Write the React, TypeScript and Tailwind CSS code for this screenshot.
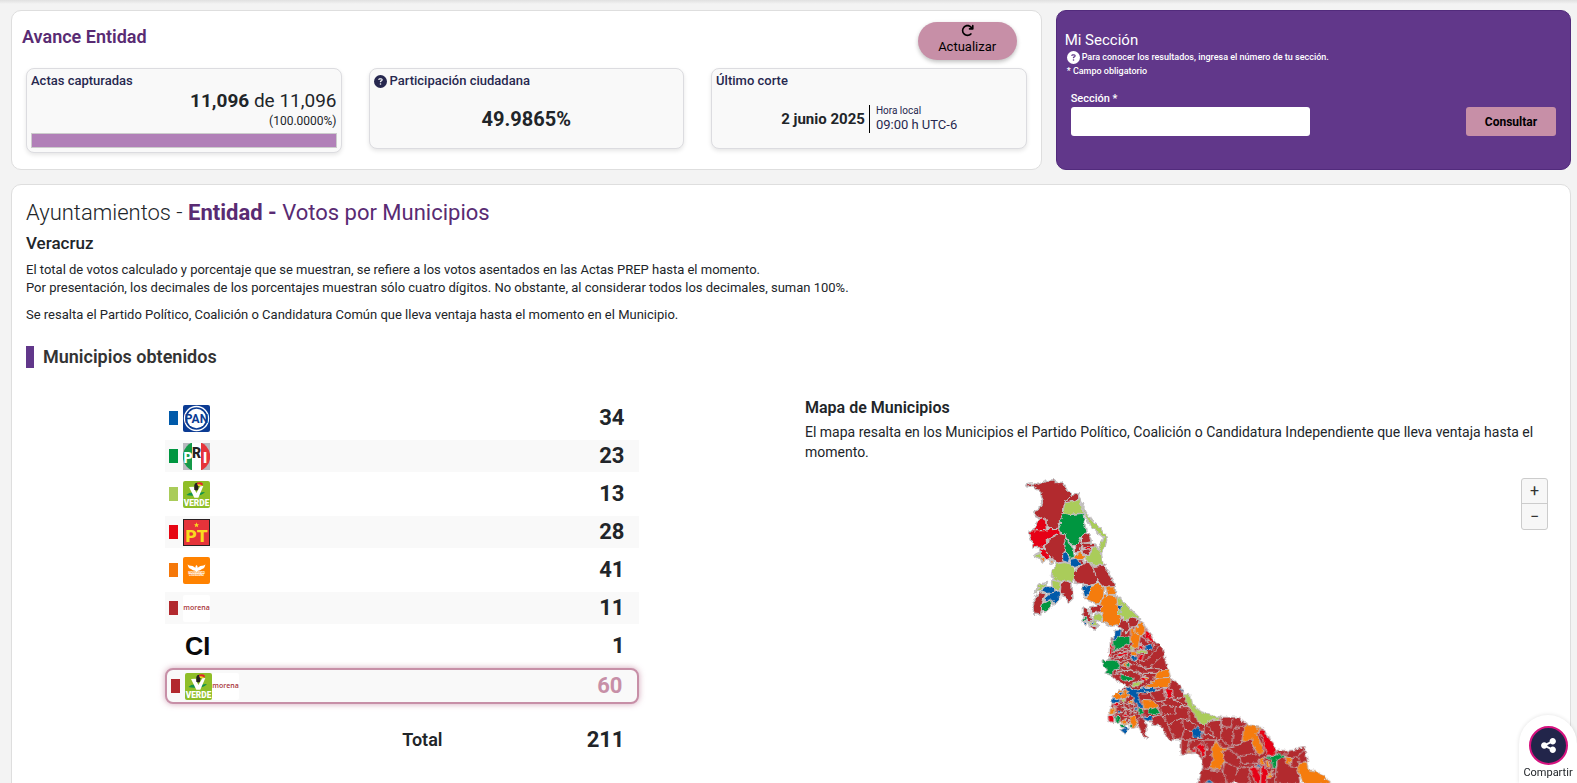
import React, { useState } from 'react';
import { FaCircleQuestion, FaArrowRotateRight, FaShareNodes } from 'react-icons/fa6';

const RED = '#b2292e';
const BRIGHT = '#e60613';
const GREEN = '#009640';
const LIME = '#aacc5a';
const BLUE = '#005aaa';
const ORANGE = '#f57c0f';

type Shape = [string, string];

const north: Shape[] = [
  [RED, '45,50 47,42 62,40 80,45 108,33 130,30 132,38 152,38 162,50 170,65 183,76 165,90 160,102 157,128 145,155 142,175 118,176 105,172 106,152 92,146 78,140 66,126 82,120 96,92 90,68 78,55 60,46'],
  [RED, '164,92 183,76 202,72 203,87 190,94 163,98'],
  [LIME, '160,102 163,98 190,94 206,88 212,108 216,130 200,130 180,134 157,128'],
  [GREEN, '157,130 180,134 216,130 222,170 226,190 212,198 205,215 185,228 165,200 160,190 140,184 150,160 145,152'],
  [GREEN, '163,200 178,226 186,236 190,262 178,265 165,245 158,225'],
  [BRIGHT, '78,158 90,142 104,152 106,180 90,182 68,180'],
  [BRIGHT, '55,183 100,182 118,176 142,175 148,188 125,200 105,215 98,232 70,232 60,205'],
  [RED, '105,218 125,202 150,188 165,200 158,225 165,245 155,258 158,275 140,280 125,265 118,258 103,248'],
  [BRIGHT, '85,237 98,235 105,250 118,262 110,268 95,258'],
  [LIME, '72,255 85,248 92,262 80,267'],
  [ORANGE, '91,262 103,265 97,278'],
  [ORANGE, '117,268 127,272 122,282'],
  [LIME, '212,100 225,128 245,155 270,180 288,202 282,228 272,246 262,240 275,215 279,203 255,183 238,162 222,135'],
  [LIME, '222,262 240,248 252,226 262,240 270,245 275,285 250,287 230,275'],
  [RED, '215,195 232,190 240,215 228,218 214,220'],
  [RED, '192,225 208,215 214,228 205,245 190,245'],
  [RED, '214,220 250,220 252,230 236,232 216,230'],
  [BRIGHT, '212,230 240,232 244,240 226,240'],
  [RED, '212,240 244,240 230,252 218,255'],
  [ORANGE, '192,262 205,245 220,258 218,268 195,270'],
  [RED, '196,268 215,270 222,280 206,282'],
  [BLUE, '155,250 165,245 175,265 172,278 155,272'],
  [BLUE, '178,268 195,265 210,280 205,288 192,292 178,285'],
  [LIME, '135,282 160,278 178,282 190,295 193,315 185,335 160,330 148,335 130,325 122,320 125,300'],
  [RED, '190,312 200,295 225,275 245,287 250,300 258,325 255,342 235,345 215,342 192,338'],
  [RED, '245,290 280,285 300,325 313,350 290,352 270,345 258,328'],
  [LIME, '122,330 148,335 145,360 125,355'],
  [LIME, '72,368 85,345 108,338 100,352 85,360'],
  [BLUE, '92,362 105,350 130,352 132,368 110,370'],
  [BLUE, '100,385 118,370 145,362 145,390 130,402 122,390 100,392'],
  [GREEN, '93,400 120,390 125,405 102,425 90,418'],
  [RED, '78,375 90,368 104,372 95,395 88,434 70,432 65,405'],
  [RED, '150,345 160,332 182,340 185,385 172,398 165,378 148,372'],
  [BLUE, '215,350 242,345 238,372 220,378'],
  [ORANGE, '225,385 245,350 255,338 280,355 277,385 262,402 230,390'],
  [ORANGE, '284,352 312,350 313,374 290,372'],
  [ORANGE, '278,378 292,374 318,378 322,400 318,420 330,440 330,462 300,468 275,455 272,425 262,412'],
  [LIME, '318,380 340,400 388,447 362,445 342,450 320,425'],
  [BLUE, '318,402 335,405 332,425 320,420'],
  [RED, '215,415 230,418 242,450 232,454 216,435'],
  [RED, '236,412 272,405 270,424 240,430'],
  [LIME, '246,438 265,430 278,448 250,455'],
  [LIME, '232,455 250,450 262,466 240,466'],
  [GREEN, '215,442 226,444 226,452 216,452'],
  [BLUE, '217,455 230,457 222,466'],
  [RED, '238,468 257,470 250,480'],
  [BLUE, '240,455 250,453 246,463'],
  [RED, '322,470 330,450 348,448 357,470 345,490 334,476'],
  [RED, '350,448 362,444 385,450 378,468 355,472'],
];

const center: Shape[] = [
  [RED, '112,100 145,83 170,88 192,105 215,145 245,175 255,222 268,262 300,290 310,315 335,345 370,390 420,390 420,450 265,450 240,408 212,402 196,385 195,430 202,446 188,440 165,395 130,400 100,385 90,350 100,310 135,290 100,265 76,240 75,210 88,208 85,160 105,128 120,118'],
  [ORANGE, '148,112 160,120 162,108 175,97 190,104 192,128 178,138 172,170 160,178 148,150'],
  [ORANGE, '162,108 178,98 192,108 192,126 178,136 162,128'],
  [BRIGHT, '193,112 215,145 224,168 206,155 193,138'],
  [BLUE, '102,122 122,118 118,137 95,157'],
  [GREEN, '95,160 112,140 145,142 147,160 125,172 100,182'],
  [BRIGHT, '85,158 94,155 92,200 84,205'],
  [BRIGHT, '175,165 188,170 182,180 172,178'],
  [BLUE, '190,170 205,162 218,172 208,182 192,182'],
  [LIME, '168,180 190,180 198,190 172,192'],
  [LIME, '147,168 155,166 160,182 150,182'],
  [ORANGE, '148,184 166,186 170,198 150,196'],
  [BLUE, '146,198 165,200 174,212 155,210'],
  [BRIGHT, '112,192 142,185 140,192 112,202'],
  [BRIGHT, '176,196 190,196 180,214 170,206'],
  [ORANGE, '122,224 140,214 150,226 135,232'],
  [GREEN, '134,222 146,220 146,232 138,230'],
  [RED, '100,205 140,200 130,212 96,218'],
  [GREEN, '63,212 100,210 118,222 115,238 95,240 96,255 75,250 80,240 68,228'],
  [GREEN, '118,252 155,262 158,270 132,273 118,265'],
  [LIME, '158,278 186,272 172,288 150,288'],
  [BRIGHT, '180,262 205,262 195,275 178,270'],
  [ORANGE, '188,256 205,262 195,270'],
  [ORANGE, '225,250 262,235 268,262 245,262 215,268'],
  [ORANGE, '190,288 235,264 268,262 270,278 262,292 210,294'],
  [BLUE, '133,290 160,298 195,293 225,298 208,310 185,312 168,308 176,330 186,352 172,352 155,320 140,312'],
  [BLUE, '178,294 215,292 228,300 205,310'],
  [RED, '205,308 250,296 255,330 228,336'],
  [ORANGE, '97,315 112,300 140,303 142,322 118,328 100,326'],
  [BLUE, '110,308 128,306 122,318'],
  [BLUE, '92,328 112,325 118,335 95,342'],
  [ORANGE, '183,328 215,330 234,352 212,358 188,356'],
  [GREEN, '200,360 225,352 238,365 225,375 205,372'],
  [GREEN, '170,358 184,355 188,372 176,372'],
  [BLUE, '180,378 216,380 212,396 192,390'],
  [BRIGHT, '252,295 272,298 274,318 258,325'],
  [BLUE, '298,292 306,300 304,312'],
  [BRIGHT, '80,378 100,375 98,398 84,395'],
  [ORANGE, '88,356 102,352 102,372 84,374'],
  [GREEN, '102,378 116,380 118,395 104,398'],
  [ORANGE, '145,378 165,380 168,412 152,416'],
  [ORANGE, '122,392 136,388 140,404 126,406'],
  [GREEN, '116,402 130,404 134,414 120,412'],
  [BLUE, '118,420 134,412 144,416 130,430'],
  [GREEN, '143,404 152,402 152,414 144,412'],
  [BLUE, '106,364 120,360 118,372'],
  [BRIGHT, '98,340 114,340 110,352 98,350'],
  [LIME, '118,330 134,326 132,340'],
  [ORANGE, '140,334 158,330 150,344'],
  [BRIGHT, '126,372 142,372 138,384 128,382'],
  [BLUE, '160,355 170,350 168,365'],
  [BLUE, '332,425 348,407 365,428 362,442 335,442'],
];

const south: Shape[] = [
  [RED, '0,105 30,130 65,165 120,171 175,172 200,195 243,202 262,225 285,270 325,272 370,262 380,305 350,325 358,372 172,372 160,360 150,372 50,372 65,320 60,295 45,280 0,282'],
  [LIME, '8,103 28,106 35,135 60,155 95,168 117,172 112,180 88,180 70,197 50,185 38,160 20,135'],
  [BRIGHT, '108,174 120,172 120,188 108,188'],
  [BLUE, '28,215 45,200 66,218 60,235 32,232'],
  [ORANGE, '105,240 118,262 137,262 135,272 122,275 131,305 115,328 85,325 95,295 90,268'],
  [BRIGHT, '48,260 62,248 76,270 64,292'],
  [BRIGHT, '28,275 45,262 42,278'],
  [ORANGE, '17,270 28,268 24,282'],
  [ORANGE, '188,205 200,195 220,198 235,205 228,222 240,250 250,275 235,285 215,260 216,238 183,246'],
  [ORANGE, '226,202 243,203 236,214'],
  [BRIGHT, '232,215 248,210 264,235 278,250 285,285 260,285 250,260 245,235'],
  [GREEN, '248,290 286,288 290,278 300,284 316,290 288,300 288,320 275,326 272,300'],
  [ORANGE, '313,290 333,292 325,318 314,308'],
  [ORANGE, '235,298 250,295 248,310 236,312'],
  [ORANGE, '254,305 266,304 268,326 258,322'],
  [ORANGE, '255,345 275,330 272,352 260,356'],
  [BRIGHT, '207,325 222,318 240,345 236,374 220,362'],
  [BRIGHT, '240,320 250,312 262,345 255,374 238,374'],
  [BLUE, '227,318 238,315 233,330'],
  [ORANGE, '348,325 355,310 378,308 382,330 405,332 445,362 450,374 370,374 358,350'],
  [BLUE, '72,368 85,358 98,370'],
];

const centerLines =
  'M112,100L140,112L148,112M145,83L140,112M170,88L162,108M178,138L205,155M172,160L192,170M120,172L148,180L110,190L90,205M95,185L125,178M100,215L160,205L190,215L235,170M110,235L160,222L200,238L240,200M150,205L185,230L255,240M118,222L170,250L225,250M105,245L150,240L190,262M100,255L130,240M140,290L200,262L160,240M128,345L138,380M145,330L150,372M158,335L160,380M120,350L168,370M100,372L160,352M105,395L165,390M112,340L165,345M160,405L180,378L170,355M226,305L250,345L285,350L325,350M250,345L232,352L240,375L215,380M285,350L280,370L240,378M275,298L275,330L325,350L325,392L345,405M275,330L310,320M245,378L260,405L300,385L325,392M300,385L310,420L335,425M260,405L280,450M310,420L300,450M365,428L375,395L420,390M365,428L400,440L410,450M375,395L400,440';

const southLines =
  'M0,195L20,195L30,160L20,135M0,230L30,232L20,270M20,195L32,215M66,218L75,200L112,235L105,250M75,185L75,200M66,218L95,240M60,235L80,262L62,300M112,180L108,235M120,188L120,200L150,205L155,175M120,200L115,235L150,262L160,205L200,195M137,265L180,250L185,245M137,265L175,290L225,280L215,262M150,262L180,250M175,290L180,310L170,325L225,318L235,298M131,305L170,325L165,350M131,305L125,335L140,372M65,325L125,335M180,310L230,310M285,300L285,372M333,292L348,290L355,310M333,292L330,320L350,322M325,272L310,285M348,290L370,270M205,325L205,372M262,345L285,340';

function Shapes({ items }: { items: Shape[] }) {
  return (
    <>
      {items.map(([fill, points], i) => (
        <polygon key={i} points={points} fill={fill} />
      ))}
    </>
  );
}

function VeracruzMap() {
  return (
    <svg viewBox="0 0 1020 939" className="w-[340px] max-w-full" role="img" aria-label="Mapa de Municipios">
      <defs>
        <filter id="coast" x="-5%" y="-5%" width="110%" height="110%">
          <feTurbulence type="fractalNoise" baseFrequency="0.08" numOctaves="2" seed="4" />
          <feDisplacementMap in="SourceGraphic" scale="14" xChannelSelector="R" yChannelSelector="G" />
        </filter>
      </defs>
      <g stroke="#c4c0c2" strokeWidth="3" strokeLinejoin="round" fill="none" filter="url(#coast)">
        <g transform="translate(510 570)">
          <Shapes items={south} />
          <path d={southLines} />
        </g>
        <g transform="translate(210 360)">
          <Shapes items={center.slice(0, 1)} />
          <path d={centerLines} />
          <Shapes items={center.slice(1)} />
        </g>
        <g transform="translate(510 570)">
          <Shapes items={south.slice(1, 2)} />
        </g>
        <g strokeWidth="6">
          <Shapes items={north} />
        </g>
        <Shapes items={north} />
      </g>
    </svg>
  );
}

const logo = 'size-[27px] shrink-0';

function PanLogo() {
  return (
    <svg viewBox="0 0 81 81" className={logo}>
      <rect width="81" height="81" rx="6" fill="#0b3b93" />
      <circle cx="40.5" cy="40.5" r="36" fill="none" stroke="#fff" strokeWidth="4" />
      <circle cx="40.5" cy="40.5" r="29" fill="#fff" />
      <text x="40.5" y="54" textAnchor="middle" fontSize="36" fontWeight="700" fontFamily="Roboto, sans-serif" fill="#0b3b93">PAN</text>
    </svg>
  );
}

function PriLogo() {
  return (
    <svg viewBox="0 0 81 81" className={logo}>
      <defs>
        <clipPath id="pri"><ellipse cx="40.5" cy="40.5" rx="41" ry="44" /></clipPath>
      </defs>
      <rect width="81" height="81" fill="#b9b9bf" />
      <g clipPath="url(#pri)">
        <rect width="27" height="81" fill="#159a49" />
        <rect x="27" width="27" height="81" fill="#fff" />
        <rect x="54" width="27" height="81" fill="#e5343b" />
      </g>
      <g fontFamily="Roboto, sans-serif" fontWeight="900" fontSize="42" textAnchor="middle">
        <text x="15" y="59" fill="#fff">P</text>
        <text x="41" y="46" fill="#262223">R</text>
        <text x="66" y="59" fill="#fff">I</text>
      </g>
    </svg>
  );
}

function VerdeLogo() {
  return (
    <svg viewBox="0 0 81 81" className={logo}>
      <rect width="81" height="81" rx="6" fill="#8fbe27" />
      <path d="M10 42Q22 32 36 36L66 33Q56 44 42 43Q24 46 10 42Z" fill="#12934a" />
      <path d="M18 18L32 17L40 36L52 16L61 15L46 50L34 50Z" fill="#fff" />
      <path d="M34 12Q36 4 44 5L47 14L45 25Q40 32 34 25Z" fill="#231f20" />
      <path d="M42 5Q54 2 60 8L58 14Q50 9 43 11Z" fill="#e5252c" />
      <path d="M43 10Q52 8 58 14L45 15Z" fill="#f6d321" />
      <text x="40.5" y="76" textAnchor="middle" fontFamily="Roboto, sans-serif" fontWeight="900" fontSize="25" fill="#fff">VERDE</text>
    </svg>
  );
}

function PtLogo() {
  return (
    <svg viewBox="0 0 81 81" className={logo}>
      <rect x="1.5" y="1.5" width="78" height="78" fill="#e5333a" stroke="#2a2022" strokeWidth="3" />
      <path d="M40.5 10L42.5 15.5L48 16L44 19.5L45.5 25L40.5 22L35.5 25L37 19.5L33 16L38.5 15.5Z" fill="#f9dc1f" />
      <text x="41" y="69" textAnchor="middle" fontFamily="Roboto, sans-serif" fontWeight="900" fontSize="52" fill="#f9dc1f">PT</text>
    </svg>
  );
}

function McLogo() {
  return (
    <svg viewBox="0 0 81 81" className={logo}>
      <rect width="81" height="81" rx="6" fill="#ff8200" />
      <path d="M14 22Q17 27 29 27L37 32L38 27L40.5 24L43 27L44 32L52 27Q64 27 67 22Q66 34 57 36Q52 41 45 41L40.5 45L36 41Q29 41 24 36Q15 34 14 22Z" fill="#fff" />
      <g fontFamily="Roboto, sans-serif" fontWeight="700" fontSize="8" textAnchor="middle" fill="#fff">
        <text x="40.5" y="51">MOVIMIENTO</text>
        <text x="40.5" y="58">CIUDADANO</text>
      </g>
    </svg>
  );
}

function MorenaLogo() {
  return (
    <svg viewBox="0 0 81 81" className={logo}>
      <rect width="81" height="81" rx="6" fill="#fff" />
      <text x="40.5" y="45" textAnchor="middle" fontFamily="'Open Sans', sans-serif" fontWeight="600" fontSize="21" fill="#a9343a">morena</text>
    </svg>
  );
}

function CiLogo() {
  return (
    <svg viewBox="0 0 81 81" className={logo}>
      <text x="44" y="67" textAnchor="middle" fontFamily="'Liberation Sans', sans-serif" fontWeight="700" fontSize="76" fill="#0a0a0a">CI</text>
    </svg>
  );
}

const parties = [
  { id: 'pan', swatch: 'bg-[#005aaa]', Logo: PanLogo, total: 34 },
  { id: 'pri', swatch: 'bg-[#009640]', Logo: PriLogo, total: 23 },
  { id: 'pvem', swatch: 'bg-[#aacc5a]', Logo: VerdeLogo, total: 13 },
  { id: 'pt', swatch: 'bg-[#e60613]', Logo: PtLogo, total: 28 },
  { id: 'mc', swatch: 'bg-[#f5780a]', Logo: McLogo, total: 41 },
  { id: 'morena', swatch: 'bg-[#b2292e]', Logo: MorenaLogo, total: 11 },
  { id: 'ci', swatch: 'bg-transparent', Logo: CiLogo, total: 1 },
];

function StatCard({ title, help, children }: { title: string; help?: boolean; children: React.ReactNode }) {
  return (
    <div className="flex min-h-[81px] flex-col rounded-lg border border-[#dcdce0] bg-[#f9f9f9] px-1 pt-1 shadow-[0_2px_4px_rgba(0,0,0,0.1)]">
      <h3 className="flex items-center gap-[3px] text-[13px] leading-4 font-medium text-[#27284f]">
        {help && <FaCircleQuestion className="size-[13px]" />}
        {title}
      </h3>
      {children}
    </div>
  );
}

export default function App() {
  const [section, setSection] = useState('');

  return (
    <div className="min-h-screen bg-[#f3f3f3] font-[Roboto,sans-serif] text-[#212529]">
      <div className="h-1 bg-linear-to-b from-[#e0e0e0] to-[#f3f3f3]" />
      <main className="pt-1.5 pr-1.5 pl-[11px]">
        <div className="grid gap-3.5 lg:grid-cols-[2fr_1fr]">
          <section className="min-h-40 rounded-[10px] border border-[#dedede] bg-white px-3.5 pt-[11px]">
            <div className="-ml-1 flex items-start justify-between pr-2.5">
              <h2 className="pt-[3px] text-lg leading-6 font-semibold text-[#592b73]">Avance Entidad</h2>
              <button className="flex h-[38px] w-[99px] flex-col items-center rounded-full bg-[#c78fa7] pt-0.5 text-[13px] leading-5 text-black shadow-[0_2px_4px_rgba(0,0,0,0.25)]">
                <FaArrowRotateRight className="size-[13px] shrink-0" />
                Actualizar
              </button>
            </div>
            <div className="mt-2 grid items-start gap-[27px] md:grid-cols-3">
              <StatCard title="Actas capturadas">
                <p className="text-right text-[19px] leading-6">
                  <b className="font-bold">11,096</b> de 11,096
                </p>
                <p className="text-right text-xs leading-4">(100.0000%)</p>
                <div className="mt-1 mb-1 h-[15px] border border-[#ccc] bg-[#b180b8]" role="progressbar" aria-valuenow={100} aria-label="Actas capturadas" />
              </StatCard>
              <StatCard title="Participación ciudadana" help>
                <p className="mt-4 text-center text-xl leading-7 font-bold">49.9865%</p>
              </StatCard>
              <StatCard title="Último corte">
                <div className="mt-4 grid grid-cols-2 items-center">
                  <p className="pr-1 text-right text-[15px] leading-7 font-bold">2 junio 2025</p>
                  <div className="border-l border-black pl-1.5 text-[13px] leading-4 text-[#27284f]">
                    <p className="text-[10px] leading-3">Hora local</p>
                    09:00 h UTC-6
                  </div>
                </div>
              </StatCard>
            </div>
          </section>

          <section className="rounded-[10px] border border-[#522b7c] bg-[#61378a] px-2 pt-[19px] text-white">
            <h2 className="text-[15px] leading-5">Mi Sección</h2>
            <div className="pl-0.5 text-[9px] leading-[14px] font-medium">
              <p className="flex items-center gap-0.5">
                <FaCircleQuestion className="size-[13px]" />
                Para conocer los resultados, ingresa el número de tu sección.
              </p>
              <p>* Campo obligatorio</p>
            </div>
            <form className="mt-[13px] flex items-end justify-between gap-4 px-1.5" onSubmit={(e) => e.preventDefault()}>
              <div className="w-[239px]">
                <label htmlFor="seccion" className="block text-[11px] leading-4 font-medium">Sección *</label>
                <input
                  id="seccion"
                  type="text"
                  value={section}
                  onChange={(e) => setSection(e.target.value)}
                  className="block h-[29px] w-full rounded-[3px] bg-white px-2 text-sm text-[#212529]"
                />
              </div>
              <button type="submit" className="h-[29px] w-[90px] rounded-[3px] bg-[#c78fa7] text-xs font-bold text-black">Consultar</button>
            </form>
          </section>
        </div>

        <section className="mt-3.5 rounded-t-[10px] border border-[#dedede] bg-white px-3.5 pt-3.5 pb-6">
          <h1 className="text-[22px] leading-7 text-[#592b73]">
            <span className="font-light text-[#212529]">Ayuntamientos - </span>
            <b className="font-bold">Entidad - </b>
            Votos por Municipios
          </h1>
          <h2 className="mt-1.5 text-[17px] leading-5 font-medium">Veracruz</h2>
          <p className="mt-2 text-[13px] leading-[18px]">
            El total de votos calculado y porcentaje que se muestran, se refiere a los votos asentados en las Actas PREP hasta el momento.
            <br />
            Por presentación, los decimales de los porcentajes muestran sólo cuatro dígitos. No obstante, al considerar todos los decimales, suman 100%.
          </p>
          <p className="mt-[9px] text-[13px] leading-[18px]">
            Se resalta el Partido Político, Coalición o Candidatura Común que lleva ventaja hasta el momento en el Municipio.
          </p>
          <h2 className="mt-[22px] border-l-8 border-[#61378a] pl-[9px] text-lg leading-[22px] font-semibold text-[#333]">Municipios obtenidos</h2>

          <div className="mt-[30px] grid gap-7 lg:grid-cols-2">
            <table className="mx-auto mt-1 block w-full max-w-[474px]" aria-label="Municipios obtenidos">
              <tbody className="flex flex-col gap-1.5">
                {parties.map(({ id, swatch, Logo, total }) => (
                  <tr key={id} className="flex h-8 items-center justify-between pr-3.5 pl-1 even:bg-[#f9f9f9]">
                    <td className="flex items-center gap-[5px]">
                      <span className={`h-3.5 w-[9px] ${swatch}`} />
                      <Logo />
                    </td>
                    <td className="text-[22px] leading-8 font-bold">{total}</td>
                  </tr>
                ))}
                <tr className="flex h-9 items-center justify-between rounded-lg border-2 border-[#c78fa7] bg-[#f9f9f9] pr-3.5 pl-1 shadow-[0_0_6px_rgba(199,143,167,0.8)]">
                  <td className="flex items-center">
                    <span className="mr-[5px] h-3.5 w-[9px] bg-[#b2292e]" />
                    <VerdeLogo />
                    <MorenaLogo />
                  </td>
                  <td className="text-[22px] leading-8 font-bold text-[#c78fa7]">60</td>
                </tr>
              </tbody>
              <tfoot className="mt-[18px] block">
                <tr className="flex h-9 items-center justify-between pr-3.5">
                  <th className="w-[278px] text-right text-lg font-semibold">Total</th>
                  <td className="text-[22px] leading-8 font-bold">211</td>
                </tr>
              </tfoot>
            </table>

            <div>
              <h3 className="text-base leading-5 font-semibold">Mapa de Municipios</h3>
              <p className="mt-1 text-sm leading-5">
                El mapa resalta en los Municipios el Partido Político, Coalición o Candidatura Independiente que lleva ventaja hasta el momento.
              </p>
              <div className="relative mt-2 flex justify-center">
                <VeracruzMap />
                <div className="absolute top-2 right-2 flex flex-col rounded-[3px] border border-[#ccc] bg-[#f7f7f7] text-base text-[#333]">
                  <button aria-label="Acercar" className="h-[25px] w-[25px] border-b border-[#ccc] leading-5">+</button>
                  <button aria-label="Alejar" className="h-[25px] w-[25px] leading-5">−</button>
                </div>
              </div>
            </div>
          </div>
        </section>
      </main>

      <button className="fixed right-0 bottom-0 flex h-[68px] w-[58px] flex-col items-center rounded-t-[29px] bg-white pt-[11px] text-[11px] leading-4 shadow-[0_0_4px_rgba(0,0,0,0.12)]">
        <span className="flex size-[39px] shrink-0 items-center justify-center rounded-full border-2 border-[#d6127f] bg-[#22254a] text-white">
          <FaShareNodes className="size-[17px]" />
        </span>
        Compartir
      </button>
    </div>
  );
}
